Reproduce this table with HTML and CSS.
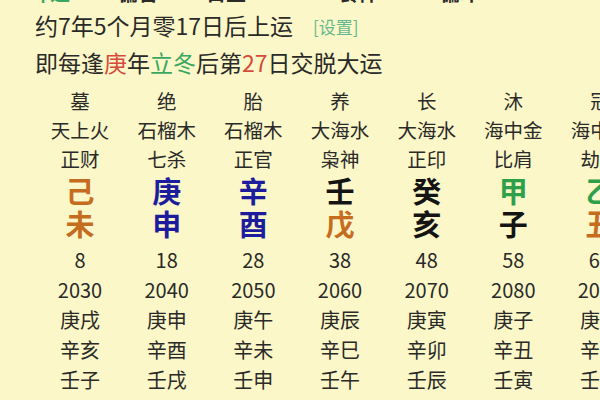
FILE: index.html
```html
<!DOCTYPE html>
<html lang="zh">
<head>
<meta charset="utf-8">
<link rel="stylesheet" href="styles.css">
</head>
<body>
<div class="page">
  <div class="cut-row">
    <span class="cut green c1">坤造</span>
    <span class="cut c2">偏官</span>
    <span class="cut c3">日主</span>
    <span class="cut c4">食神</span>
    <span class="cut c5">偏印</span>
  </div>
  <div class="line line1">约7年5个月零17日后上运<span class="setting">[设置]</span></div>
  <div class="line line2">即每逢<span class="red">庚</span>年<span class="green">立冬</span>后第<span class="red">27</span>日交脱大运</div>

  <div class="table">
    <div class="col">
      <div class="s">墓</div><div class="s">天上火</div><div class="s">正财</div>
      <div class="b orange first">己</div><div class="b orange">未</div>
      <div class="n first">8</div><div class="n">2030</div><div class="n">庚戌</div><div class="n">辛亥</div><div class="n">壬子</div>
    </div>
    <div class="col">
      <div class="s">绝</div><div class="s">石榴木</div><div class="s">七杀</div>
      <div class="b blue first">庚</div><div class="b blue">申</div>
      <div class="n first">18</div><div class="n">2040</div><div class="n">庚申</div><div class="n">辛酉</div><div class="n">壬戌</div>
    </div>
    <div class="col">
      <div class="s">胎</div><div class="s">石榴木</div><div class="s">正官</div>
      <div class="b blue first">辛</div><div class="b blue">酉</div>
      <div class="n first">28</div><div class="n">2050</div><div class="n">庚午</div><div class="n">辛未</div><div class="n">壬申</div>
    </div>
    <div class="col">
      <div class="s">养</div><div class="s">大海水</div><div class="s">枭神</div>
      <div class="b black first">壬</div><div class="b orange">戊</div>
      <div class="n first">38</div><div class="n">2060</div><div class="n">庚辰</div><div class="n">辛巳</div><div class="n">壬午</div>
    </div>
    <div class="col">
      <div class="s">长</div><div class="s">大海水</div><div class="s">正印</div>
      <div class="b black first">癸</div><div class="b black">亥</div>
      <div class="n first">48</div><div class="n">2070</div><div class="n">庚寅</div><div class="n">辛卯</div><div class="n">壬辰</div>
    </div>
    <div class="col">
      <div class="s">沐</div><div class="s">海中金</div><div class="s">比肩</div>
      <div class="b green first">甲</div><div class="b black">子</div>
      <div class="n first">58</div><div class="n">2080</div><div class="n">庚子</div><div class="n">辛丑</div><div class="n">壬寅</div>
    </div>
    <div class="col">
      <div class="s">冠</div><div class="s">海中金</div><div class="s">劫财</div>
      <div class="b green first">乙</div><div class="b orange">丑</div>
      <div class="n first">68</div><div class="n">2090</div><div class="n">庚戌</div><div class="n">辛亥</div><div class="n">壬子</div>
    </div>
  </div>
</div>
</body>
</html>
```

FILE: styles.css
```css
html, body {
  margin: 0;
  padding: 0;
  width: 600px;
  height: 400px;
  overflow: hidden;
  background: #fbf7c8;
}
.page {
  font-family: "Noto Sans CJK SC", "Noto Sans", sans-serif;
  color: #2a2a28;
  width: 600px;
  height: 400px;
  overflow: hidden;
}
.cut-row {
  position: relative;
  height: 5px;
  overflow: hidden;
}
.cut {
  position: absolute;
  top: -17px;
  font-size: 20px;
  line-height: 20px;
  font-weight: 700;
}
.c1 { left: 30px; }
.c2 { left: 118px; }
.c3 { left: 206px; }
.c4 { left: 338px; }
.c5 { left: 440px; }

.line {
  padding-left: 35px;
  font-size: 23px;
  white-space: nowrap;
}
.line1 {
  margin-top: 2px;
  line-height: 36px;
}
.line2 {
  line-height: 32px;
}
.setting {
  font-size: 17px;
  color: #66b98f;
  margin-left: 20px;
  position: relative;
  top: -1px;
}
.red { color: #d64a3a; }
.green { color: #3aa662; }

.table {
  display: grid;
  grid-template-columns: repeat(8, 86.67px);
  margin-left: 36.7px;
  margin-top: 8px;
  width: 700px;
}
.col {
  display: flex;
  flex-direction: column;
  align-items: center;
  white-space: nowrap;
}
.s {
  font-size: 19.5px;
  line-height: 29px;
}
.b {
  font-size: 29px;
  line-height: 33px;
  font-weight: 700;
}
.b.first { margin-top: 1px; }
.n {
  font-size: 20px;
  line-height: 30px;
}
.n.first { margin-top: 5px; }
.orange { color: #c66c1f; }
.blue { color: #1c1c9c; }
.black { color: #141414; }
.b.green { color: #2fa04a; }
```
